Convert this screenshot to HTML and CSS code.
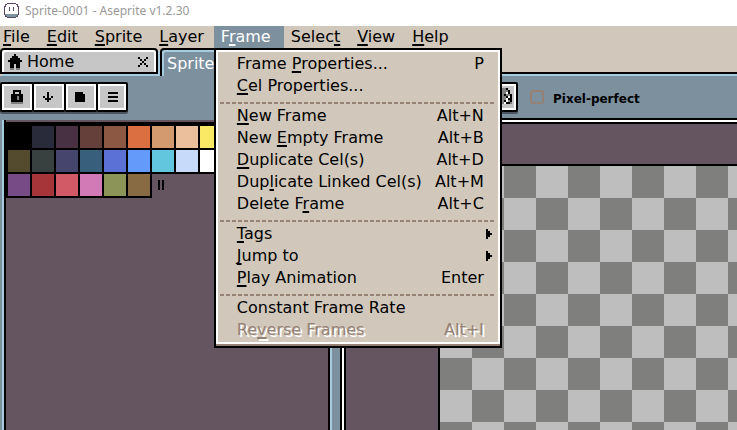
FILE: index.html
```
<!DOCTYPE html>
<html lang="en">
<head>
<meta charset="utf-8">
<title>Sprite-0001 - Aseprite v1.2.30</title>
<link rel="stylesheet" href="styles.css">
</head>
<body>
<div class="app">
  <header class="titlebar">
    <svg class="app-icon" viewBox="0 0 16 16" aria-hidden="true">
      <path fill="#5b4a63" d="M3 0h9v1h2v2h1v9h-1v2h-2v1H3v-1H1v-2H0V3h1V1h2z"/>
      <path fill="#fff" d="M3 1h9v1h1v2h1v7H1V4h1V2h1z"/>
      <path fill="#7c93a0" d="M1 11h13v1h-1v1h-1v1H3v-1H2v-1H1z"/>
      <path fill="#5b4a63" d="M5 4h1v4H5zM9 4h1v4H9z"/>
    </svg>
    <span>Sprite-0001 - Aseprite v1.2.30</span>
  </header>
  <nav class="menubar" aria-label="Main menu">
    <button class="menu-title"><u>F</u>ile</button>
    <button class="menu-title"><u>E</u>dit</button>
    <button class="menu-title"><u>S</u>prite</button>
    <button class="menu-title"><u>L</u>ayer</button>
    <div class="menu-open">
      <button class="menu-title active" aria-expanded="true">F<u>r</u>ame</button>
      <div class="popup" role="menu">
        <button class="item" role="menuitem"><span>Frame <u>P</u>roperties...</span><span>P</span></button>
        <button class="item" role="menuitem"><span><u>C</u>el Properties...</span></button>
        <div class="separator" role="separator"></div>
        <button class="item" role="menuitem"><span><u>N</u>ew Frame</span><span>Alt+N</span></button>
        <button class="item" role="menuitem"><span>New <u>E</u>mpty Frame</span><span>Alt+B</span></button>
        <button class="item" role="menuitem"><span><u>D</u>uplicate Cel(s)</span><span>Alt+D</span></button>
        <button class="item" role="menuitem"><span>Dup<u>l</u>icate Linked Cel(s)</span><span>Alt+M</span></button>
        <button class="item" role="menuitem"><span>Delete F<u>r</u>ame</span><span>Alt+C</span></button>
        <div class="separator" role="separator"></div>
        <button class="item sub" role="menuitem"><span><u>T</u>ags</span><svg class="arrow" viewBox="0 0 3 5" aria-hidden="true"><path d="M0 0h1v1h1v1h1v1H2v1H1v1H0z"/></svg></button>
        <button class="item sub" role="menuitem"><span><u>J</u>ump to</span><svg class="arrow" viewBox="0 0 3 5" aria-hidden="true"><path d="M0 0h1v1h1v1h1v1H2v1H1v1H0z"/></svg></button>
        <button class="item" role="menuitem"><span><u>P</u>lay Animation</span><span>Enter</span></button>
        <div class="separator" role="separator"></div>
        <button class="item" role="menuitem"><span>Constant Frame Rate</span></button>
        <button class="item" role="menuitem" disabled><span>Re<u>v</u>erse Frames</span><span>Alt+I</span></button>
      </div>
    </div>
    <button class="menu-title">Selec<u>t</u></button>
    <button class="menu-title"><u>V</u>iew</button>
    <button class="menu-title"><u>H</u>elp</button>
  </nav>
  <div class="tabs">
    <div class="tab">
      <svg class="home" viewBox="0 0 14 16" aria-hidden="true"><path d="M6 0h2v2h2v2h2v2h2v2h-2v6H8v-4H6v4H2V8H0V6h2V4h2V2h2z"/><path fill="#7f7f7f" d="M2 14h4v2H2zM8 14h4v2H8z"/></svg>
      <span>Home</span>
      <button class="close" aria-label="Close Home"><svg viewBox="0 0 5 5"><path d="M0 0h1v1H0zM4 0h1v1H4zM1 1h1v1H1zM3 1h1v1H3zM2 2h1v1H2zM1 3h1v1H1zM3 3h1v1H3zM0 4h1v1H0zM4 4h1v1H4z"/></svg></button>
    </div>
    <div class="tab current"><span>Sprite</span></div>
    <div class="tab-rest"></div>
  </div>
  <main class="workspace">
    <section class="left">
      <div class="palette-tools">
        <button class="tool" aria-label="Edit color"><svg viewBox="0 0 6 7"><path d="M1 0h4v2h1v4H0V2h1zM2 1v1h2V1z" fill-rule="evenodd"/><path fill="#7f7f7f" d="M3 3h1v2H3zM0 6h6v1H0z"/></svg></button>
        <button class="tool" aria-label="Sort colors"><svg viewBox="0 0 6 7"><path d="M2 1h1v5H2zM0 3h1v1H0zM4 3h1v1H4zM1 4h3v1H1z"/></svg></button>
        <button class="tool" aria-label="Presets"><svg viewBox="0 0 6 7"><path d="M0 1h4v1h1v4H0z"/></svg></button>
        <button class="tool" aria-label="Options"><svg viewBox="0 0 6 7"><path d="M1 1h5v1H1zM1 3h5v1H1zM1 5h5v1H1z"/></svg></button>
      </div>
      <div class="palette">
        <div class="row full">
          <i class="c1"></i><i class="c2"></i><i class="c3"></i><i class="c4"></i><i class="c5"></i><i class="c6"></i><i class="c7"></i><i class="c8"></i><i class="c9"></i>
        </div>
        <div class="row full">
          <i class="c10"></i><i class="c11"></i><i class="c12"></i><i class="c13"></i><i class="c14"></i><i class="c15"></i><i class="c16"></i><i class="c17"></i><i class="c18"></i>
        </div>
        <div class="row">
          <i class="c19"></i><i class="c20"></i><i class="c21"></i><i class="c22"></i><i class="c23"></i><i class="c24"></i>
          <span class="grip"></span>
        </div>
      </div>
    </section>
    <section class="right">
      <div class="context">
        <button class="tool" aria-label="Ink"><svg viewBox="0 0 12 9"><path fill="#7f7f7f" d="M5 0h4v1h1v3h1v4H5z"/><path d="M8 0h1v1H8zM9 1h1v2H9zM7 3h1v1H7zM8 4h1v1H8zM10 3h1v4h-1zM7 6h1v1H7zM8 7h2v1H8zM9 5h1v1H9z"/><path fill="#fff" d="M8 2h1v1H8zM9 4h1v1H9zM8 5h1v2H8zM7 7h1v1H7z"/></svg></button>
        <label class="check"><input type="checkbox"><span>Pixel-perfect</span></label>
      </div>
      <div class="editor"><div class="canvas"></div></div>
    </section>
  </main>
</div>
</body>
</html>
```
FILE: styles.css
```
* { box-sizing: border-box; }
body {
  margin: 0;
  overflow: hidden;
  font: 16px/22px "DejaVu Sans", sans-serif;
  color: #000;
}
button {
  margin: 0;
  padding: 0;
  border: 0;
  background: none;
  font: inherit;
  color: inherit;
}
svg { display: block; shape-rendering: crispEdges; }
u { text-decoration-thickness: 2px; text-underline-offset: 2px; text-decoration-skip-ink: none; }

.app { display: flex; flex-direction: column; height: 100vh; background: #d1c8bb; }

.titlebar {
  display: flex;
  align-items: center;
  gap: 5px;
  height: 26px;
  padding: 0 4px 4px;
  background: #fff;
  color: #999;
  font: 12px/20px "Noto Sans", sans-serif;
}
.app-icon { width: 16px; height: 16px; }

.menubar { display: flex; height: 22px; }
.menu-title { height: 22px; padding: 0 10px 0 7px; white-space: nowrap; line-height: 20px; }
.menubar > .menu-title:first-child { padding-left: 3px; }
.menu-title.active { min-width: 70px; background: #7c909e; color: #fff; text-align: left; }
.menu-open { position: relative; }

.popup {
  position: absolute;
  z-index: 2;
  top: 22px;
  left: 0;
  width: 288px;
  padding: 3px 6px 5px 4px;
  background: #d1c8bb;
  border: 2px solid #000;
  box-shadow: inset 0 -2px #968275, inset 0 0 0 2px #fff, inset 0 -4px #fff;
}
.item {
  display: flex;
  justify-content: space-between;
  align-items: center;
  width: 100%;
  height: 22px;
  padding: 0 10px 0 17px;
}
.item.sub { padding-right: 2px; }
.item:disabled { color: #968275; text-shadow: 2px 2px #fff; }
.arrow { width: 6px; height: 10px; }
.separator {
  height: 8px;
  padding-top: 5px;
}
.separator::before {
  content: "";
  display: block;
  height: 2px;
  background: repeating-linear-gradient(90deg, #968275 0 4px, transparent 4px 6px);
}

.tabs { display: flex; height: 28px; background: #d1c8bb; }
.tab {
  display: flex;
  align-items: center;
  width: 158px;
  height: 26px;
  padding: 2px 8px 0 4px;
  border: 2px solid #000;
  border-radius: 4px 4px 0 0;
  background: #c6c6c6;
  box-shadow: inset 2px 2px #fff, inset -2px 0 #fff, 2px 2px #a6cbdf;
}
.tab.current {
  height: 28px;
  margin-left: 2px;
  padding-left: 5px;
  border-bottom: 0;
  background: #7c909e;
  box-shadow: inset 2px 2px #a6cbdf;
  color: #fff;
}
.home { width: 14px; height: 16px; margin: 0 5px 0 2px; }
.close { margin-left: auto; }
.close svg { width: 10px; height: 10px; }
.tab-rest {
  flex: 1;
  align-self: flex-end;
  height: 4px;
  border-top: 2px solid #000;
  background: #a6cbdf;
}

.workspace { display: flex; flex: 1; min-height: 0; background: #7c909e; }
.left { display: flex; flex-direction: column; width: 340px; padding-right: 8px; }
.palette-tools { display: flex; height: 44px; padding-top: 6px; }
.tool {
  display: grid;
  place-items: center;
  width: 32px;
  height: 30px;
  border: 2px solid #000;
  border-radius: 2px;
  background: #c6c6c6;
  box-shadow: inset 0 0 0 2px #fff, 0 2px #4b5560;
}
.palette-tools .tool:not(:last-child) { width: 34px; margin-right: -2px; }
.palette-tools .tool svg { width: 12px; height: 14px; }
.palette {
  flex: 1;
  margin-left: 2px;
  border: solid #a6cbdf;
  border-width: 0 2px;
  background: #655561;
  box-shadow: inset 2px 0 #000, inset -2px 0 #000;
  padding-top: 2px;
}
.row { display: flex; height: 24px; padding-left: 2px; }
.row:first-child { height: 26px; padding-top: 2px; }
.row i { width: 26px; height: 26px; margin-right: -2px; border: 2px solid #000; }
.full { background: #000; }
.grip { width: 6px; height: 10px; margin: 8px 0 0 8px; border: solid #000; border-width: 0 2px; }

.c1 { background: #000; }
.c2 { background: #292b3a; }
.c3 { background: #483142; }
.c4 { background: #65403a; }
.c5 { background: #8c5844; }
.c6 { background: #dc6f42; }
.c7 { background: #d39a70; }
.c8 { background: #ebbf9c; }
.c9 { background: #f9e965; }
.c10 { background: #544b2f; }
.c11 { background: #394040; }
.c12 { background: #45456d; }
.c13 { background: #385f7c; }
.c14 { background: #5b71d5; }
.c15 { background: #649afa; }
.c16 { background: #62c6de; }
.c17 { background: #c8dafa; }
.c18 { background: #fff; }
.c19 { background: #764b86; }
.c20 { background: #a63539; }
.c21 { background: #d25966; }
.c22 { background: #d27ab6; }
.c23 { background: #8c9458; }
.c24 { background: #886b42; }

.right { display: flex; flex: 1; flex-direction: column; }
.context { display: flex; height: 42px; padding: 6px 0 0 146px; }
.check {
  display: flex;
  align-items: center;
  gap: 9px;
  height: 30px;
  padding-left: 12px;
  font: bold 12px/16px "DejaVu Sans", sans-serif;
}
.check span { padding-top: 4px; }
.check input {
  appearance: none;
  width: 14px;
  height: 14px;
  margin: 0;
  border: 2px solid #968275;
  border-radius: 3px;
}
.context .tool svg { width: 24px; height: 18px; }
.editor {
  display: flex;
  flex: 1;
  padding: 40px 0 0 92px;
  border: solid #000;
  border-width: 2px 0 0 2px;
  background: #655561;
  outline: 2px solid #fff;
  box-shadow: 0 0 0 4px #000;
  margin: 4px 0 0 4px;
}
.canvas {
  flex: 1;
  border: solid #000;
  border-width: 2px 0 0 2px;
  background: repeating-conic-gradient(#bebebe 0 25%, #7f7f7d 0 50%) 0 0 / 64px 64px;
}
```
